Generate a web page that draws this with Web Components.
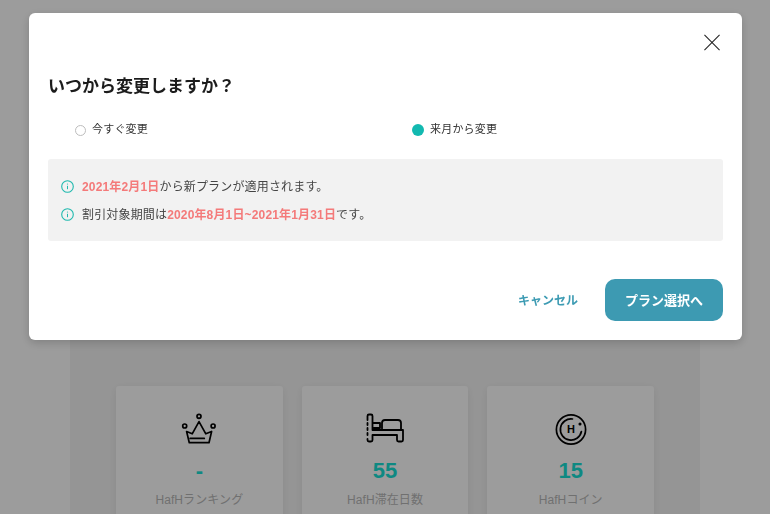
<!DOCTYPE html>
<html lang="ja">
<head>
<meta charset="utf-8">
<title>プラン変更</title>
<style>
  html, body {
    margin: 0;
    height: 100%;
    overflow: hidden;
    background: #fff;
    font-family: "Liberation Sans", "Noto Sans CJK JP", sans-serif;
  }
</style>
</head>
<body>
<hafh-dashboard>
  <hafh-stat value="-" label="HafHランキング">
    <svg viewBox="0 0 60 60" fill="none" stroke="#000" stroke-width="1.7" stroke-linejoin="round" stroke-linecap="round">
      <circle cx="30" cy="16.3" r="2"/>
      <circle cx="15.7" cy="26" r="2"/>
      <circle cx="44.1" cy="26" r="2"/>
      <path d="M17.6 31.5l5.6 2.3 6.8-12.2 6.8 12.2 5.8-2.3-2.6 11.2H20.3z"/>
      <path d="M21.1 38.4H35.3"/>
    </svg>
  </hafh-stat>
  <hafh-stat value="55" label="HafH滞在日数">
    <svg viewBox="0 0 60 60" fill="none" stroke="#000" stroke-width="1.8" stroke-linejoin="round" stroke-linecap="round">
      <path d="M12.5 20V16a1.5 1.5 0 0 1 1.5-1.5h2a1.5 1.5 0 0 1 1.5 1.5v14H48v10a1.5 1.5 0 0 1-1.5 1.5h-3a1.5 1.5 0 0 1-1.5-1.5v-5H17.5v5a1.5 1.5 0 0 1-1.5 1.5h-2a1.5 1.5 0 0 1-1.5-1.5v-1"/>
      <path d="M12.5 23v2M12.5 28v2M12.5 33v2"/>
      <path d="M18.5 23h6.5v5h-6.5"/>
      <path d="M27 28.5V23a3 3 0 0 1 3-3h13a3 3 0 0 1 3 3v6"/>
    </svg>
  </hafh-stat>
  <hafh-stat value="15" label="HafHコイン">
    <svg viewBox="0 0 60 60" fill="none" stroke="#000" stroke-width="1.7" stroke-linecap="round">
      <circle cx="30" cy="29.5" r="14.6"/>
      <path d="M31.5 19a10.6 10.6 0 1 0 8.9 12.5"/>
      <circle cx="39" cy="24" r=".7" fill="#000"/>
      <text x="30" y="33" text-anchor="middle" fill="#000" stroke="none" font-size="11" font-weight="700" font-family="Liberation Sans, sans-serif">H</text>
    </svg>
  </hafh-stat>
</hafh-dashboard>

<hafh-modal heading="いつから変更しますか？" cancel="キャンセル" confirm="プラン選択へ">
  <hafh-radio slot="options">今すぐ変更</hafh-radio>
  <hafh-radio slot="options" checked>来月から変更</hafh-radio>
  <hafh-note><em>2021年2月1日</em>から新プランが適用されます。</hafh-note>
  <hafh-note>割引対象期間は<em>2020年8月1日~2021年1月31日</em>です。</hafh-note>
</hafh-modal>

<script>
const dashboardTemplate = document.createElement('template')

dashboardTemplate.innerHTML = `
  <style>
    :host {
      display: block;
      height: 100vh;
      padding-top: 100px;
      box-sizing: border-box;
      overflow: hidden;
    }

    #panel {
      display: grid;
      grid-template-columns: repeat(3, 1fr);
      gap: 19px;
      align-items: start;
      box-sizing: border-box;
      height: 100%;
      margin: 0 70px;
      padding: 286px 46px 0;
      background: #f4f4f4;
    }
  </style>
  <div id="panel"><slot></slot></div>
`

customElements.define('hafh-dashboard',
  class extends HTMLElement {
    constructor () {
      super()

      this.attachShadow({ mode: 'open' })
        .appendChild(dashboardTemplate.content.cloneNode(true))
    }
  })

const statTemplate = document.createElement('template')

statTemplate.innerHTML = `
  <style>
    :host {
      display: flex;
      flex-direction: column;
      align-items: center;
      height: 160px;
      padding-top: 14px;
      box-sizing: border-box;
      background: #fff;
      border-radius: 3px;
      box-shadow: 0 2px 10px rgba(0, 0, 0, .07);
    }

    ::slotted(svg) {
      display: block;
      width: 60px;
      height: 60px;
    }

    #value {
      margin-top: -2px;
      font-size: 22px;
      line-height: 26px;
      font-weight: 700;
      color: #18e0d5;
    }

    #label {
      margin-top: 7px;
      font-size: 12px;
      line-height: 18px;
      letter-spacing: .1px;
      color: #b8b8b8;
    }
  </style>
  <slot></slot>
  <div id="value"></div>
  <div id="label"></div>
`

customElements.define('hafh-stat',
  class extends HTMLElement {
    constructor () {
      super()

      this.attachShadow({ mode: 'open' })
        .appendChild(statTemplate.content.cloneNode(true))

      this.shadowRoot.querySelector('#value').textContent = this.getAttribute('value')
      this.shadowRoot.querySelector('#label').textContent = this.getAttribute('label')
    }
  })

const modalTemplate = document.createElement('template')

modalTemplate.innerHTML = `
  <style>
    :host {
      position: fixed;
      inset: 0;
      display: flex;
      align-items: flex-start;
      padding: 13px 0 0 29px;
      background: rgba(0, 0, 0, .39);
    }

    #dialog {
      display: flex;
      flex-direction: column;
      box-sizing: border-box;
      width: 713px;
      height: 327px;
      padding: 21px 19px 19px;
      background: #fff;
      border-radius: 6px;
      box-shadow: 0 3px 10px rgba(0, 0, 0, .18);
    }

    #close {
      display: block;
      align-self: flex-end;
      width: 18px;
      height: 18px;
      margin-right: 2px;
    }

    h2 {
      margin: 24px 0 0;
      font-size: 17px;
      line-height: 24px;
      font-weight: 700;
      color: #1c1c1c;
    }

    #options {
      display: grid;
      grid-template-columns: 337px 1fr;
      margin-top: 19px;
    }

    #notes {
      display: flex;
      flex-direction: column;
      gap: 8px;
      margin-top: 21px;
      padding: 17px 13px;
      background: #f2f2f2;
      border-radius: 3px;
    }

    #actions {
      display: flex;
      align-items: center;
      justify-content: flex-end;
      gap: 27px;
      margin-top: 38px;
    }

    #cancel {
      padding-bottom: 2px;
      font-size: 12px;
      font-weight: 700;
      color: #3d9bb3;
    }

    #confirm {
      display: flex;
      align-items: center;
      justify-content: center;
      box-sizing: border-box;
      width: 118px;
      height: 42px;
      padding-bottom: 2px;
      font-size: 13px;
      font-weight: 700;
      color: #fff;
      background: #3d9ab2;
      border-radius: 10px;
    }
  </style>
  <div id="dialog">
    <svg id="close" viewBox="0 0 18 18" fill="none" stroke="#222" stroke-width="1.1">
      <path d="M1 1l16 16M17 1L1 17"/>
    </svg>
    <h2></h2>
    <div id="options"><slot name="options"></slot></div>
    <div id="notes"><slot></slot></div>
    <div id="actions">
      <span id="cancel"></span>
      <span id="confirm"></span>
    </div>
  </div>
`

customElements.define('hafh-modal',
  class extends HTMLElement {
    constructor () {
      super()

      this.attachShadow({ mode: 'open' })
        .appendChild(modalTemplate.content.cloneNode(true))

      this.shadowRoot.querySelector('h2').textContent = this.getAttribute('heading')
      this.shadowRoot.querySelector('#cancel').textContent = this.getAttribute('cancel')
      this.shadowRoot.querySelector('#confirm').textContent = this.getAttribute('confirm')
    }
  })

const radioTemplate = document.createElement('template')

radioTemplate.innerHTML = `
  <style>
    :host {
      display: flex;
      align-items: center;
      gap: 6px;
      height: 20px;
      padding-left: 27px;
      font-size: 11px;
      letter-spacing: .2px;
      color: #333;
    }

    #mark {
      flex: none;
      box-sizing: border-box;
      width: 11px;
      height: 11px;
      margin-top: 4px;
      border: 1px solid #bdbdbd;
      border-radius: 50%;
    }

    :host([checked]) #mark {
      width: 12px;
      height: 12px;
      border: none;
      background: #12b9b0;
    }
  </style>
  <span id="mark"></span>
  <slot></slot>
`

customElements.define('hafh-radio',
  class extends HTMLElement {
    constructor () {
      super()

      this.attachShadow({ mode: 'open' })
        .appendChild(radioTemplate.content.cloneNode(true))
    }
  })

const noteTemplate = document.createElement('template')

noteTemplate.innerHTML = `
  <style>
    :host {
      display: flex;
      align-items: center;
      gap: 8px;
      height: 20px;
      font-size: 12px;
      letter-spacing: .16px;
      color: #444;
    }

    svg {
      flex: none;
      width: 13px;
      height: 13px;
    }

    span {
      padding-bottom: 2px;
    }

    ::slotted(em) {
      font-style: normal;
      font-weight: 700;
      color: #f47a7a;
    }
  </style>
  <svg viewBox="0 0 13 13" fill="none" stroke="#1fb9ae" stroke-width="1.1">
    <circle cx="6.5" cy="6.5" r="5.8"/>
    <path d="M6.5 5.8v3.4" stroke-width="1"/>
    <circle cx="6.5" cy="4" r=".6" fill="#1fb9ae" stroke="none"/>
  </svg>
  <span><slot></slot></span>
`

customElements.define('hafh-note',
  class extends HTMLElement {
    constructor () {
      super()

      this.attachShadow({ mode: 'open' })
        .appendChild(noteTemplate.content.cloneNode(true))
    }
  })
</script>
</body>
</html>
